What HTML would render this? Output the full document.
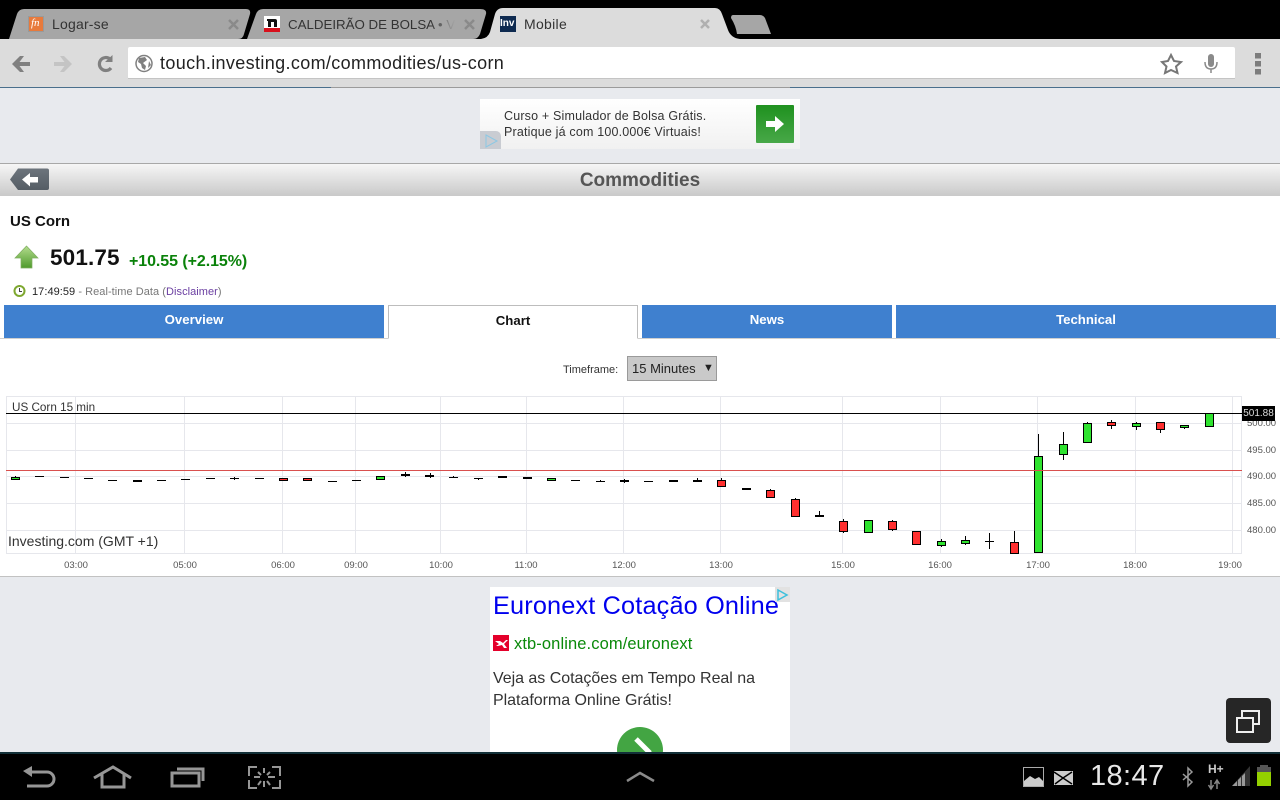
<!DOCTYPE html>
<html><head><meta charset="utf-8"><title>Mobile</title>
<style>
html,body{margin:0;padding:0;background:#000}
#p{position:relative;width:1280px;height:800px;overflow:hidden;background:#e8eaee;font-family:"Liberation Sans",sans-serif;color:#111}
.a{position:absolute;white-space:nowrap}
svg{position:absolute;left:0;top:0}
.tab{top:305px;height:33px;line-height:30px;background:#3f80cf;color:#fff;font-weight:bold;font-size:13.2px;text-align:center}
.g line{stroke:#e6e7ec;stroke-width:1}
.x{font-size:9.5px;color:#555;top:560px;width:40px;text-align:center}
.y{font-size:9.5px;color:#555;left:1247px}
</style></head><body><div id="p">
<div class="a" style="left:0;top:0;width:1280px;height:39px;background:#000"></div>
<svg width="1280" height="90">
<path d="M9 39 L17 14 Q19 9 24 9 H246 Q251 9 250 14 L244 34 Q243 39 238 39Z" fill="#a6a6a6"/>
<path d="M247 39 L256 14 Q258 9 263 9 H480 Q487 9 486 14 L480 34 Q478 39 473 39Z" fill="#a6a6a6"/>
<path d="M481 39 Q488 38 490 32 L495 14 Q497 8 503 8 H715 Q720 8 722 14 L728 30 Q731 38 740 39Z" fill="#dcdcdc"/>
<path d="M733 15 H760 Q763 15 765 18 L771 34 H737 Q736 26 731 18 Q731 15 733 15Z" fill="#a6a6a6"/>
<rect x="0" y="39" width="1280" height="48" fill="#dcdcdc"/>
<rect x="128" y="47" width="1107" height="32" rx="2" fill="#fff"/>
<rect x="128" y="78" width="1107" height="1" fill="#c4c4c4"/>
<rect x="0" y="87" width="331" height="1" fill="#4a6f8c"/>
<rect x="331" y="87" width="459" height="1" fill="#9b9b9b"/>
<rect x="790" y="87" width="490" height="1" fill="#4a6f8c"/>
<!-- favicons -->
<rect x="28.500" y="16.500" width="15" height="15" fill="#e87a3c" stroke="#999"/>
<rect x="264" y="16" width="16" height="12" fill="#fff"/><rect x="264" y="28" width="16" height="4" fill="#d8101c"/>
<path d="M267 19 H275 Q277 19 277 21 V27 H274 V22 H271 V27 H268 V21 H267Z" fill="#111"/>
<rect x="500" y="16" width="16" height="16" fill="#0e2a50"/>
<!-- close -->
<path d="M229 20 L238 29 M238 20 L229 29 M465 20 L474 29 M474 20 L465 29" stroke="#8a8a8a" stroke-width="2.500"/>
<path d="M701 20 L709 28 M709 20 L701 28" stroke="#b0b0b0" stroke-width="2.500"/>
<!-- nav -->
<path d="M30 64 H17" fill="none" stroke="#808080" stroke-width="4"/><path d="M20 56 H24 L18 64 L24 72 H20 L12 64Z" fill="#808080"/>
<path d="M54 64 H67" fill="none" stroke="#c4c4c4" stroke-width="4"/><path d="M64 56 H60 L66 64 L60 72 H64 L72 64Z" fill="#c4c4c4"/>
<path d="M111 68 A6.500 6.500 0 1 1 110 59" fill="none" stroke="#808080" stroke-width="3.200"/><path d="M105 62 H112.500 V55Z" fill="#808080"/>
<circle cx="144" cy="63.500" r="8" fill="none" stroke="#808080" stroke-width="1.500"/>
<path d="M139 58 L145 57 L147 60 L143 63 L146 66 L145 70 L142 68 L141 64 L138 62Z M149 61 L151 65 L148 68Z" fill="#808080"/>
<path d="M1171 55 L1174 61 L1181 62 L1176 66.500 L1177.500 73 L1171 70 L1165 73 L1166.500 66.500 L1162 62 L1168 61Z" fill="#fff" stroke="#777" stroke-width="2"/>
<rect x="1208" y="54" width="6" height="13" rx="3" fill="#8a8a8a"/><path d="M1205 62 Q1205 69 1211 69 Q1217 69 1217 62 M1211 69 V73" fill="none" stroke="#8a8a8a" stroke-width="1.500"/>
<rect x="1255" y="53" width="6" height="5.500" fill="#7d7d7d"/><rect x="1255" y="61" width="6" height="5.500" fill="#7d7d7d"/><rect x="1255" y="69" width="6" height="5.500" fill="#7d7d7d"/>
</svg>
<div class="a" style="left:31px;top:17px;font:italic 11px 'Liberation Serif',serif;color:#fff">fn</div>
<div class="a" style="left:500px;top:18px;font:bold 10px 'Liberation Sans',sans-serif;color:#fff">Inv</div>
<div class="a" style="left:52px;top:16px;font-size:14px;color:#333;letter-spacing:.2px">Logar-se</div>
<div class="a" style="left:288px;top:17px;width:167px;overflow:hidden;font-size:13.300px;color:#333;-webkit-mask-image:linear-gradient(90deg,#000 85%,transparent);mask-image:linear-gradient(90deg,#000 85%,transparent)">CALDEIRÃO DE BOLSA • Ve</div>
<div class="a" style="left:524px;top:16px;font-size:14px;color:#333;letter-spacing:.3px">Mobile</div>
<div class="a" style="left:160px;top:53px;font-size:18px;color:#222;letter-spacing:.36px">touch.investing.com/commodities/us-corn</div>

<!-- top ad -->
<div class="a" style="left:480px;top:99px;width:320px;height:50px;background:linear-gradient(#fff,#f1f1f1)"></div>
<div class="a" style="left:504px;top:108px;font-size:12.500px;line-height:16px;color:#333;letter-spacing:.18px">Curso + Simulador de Bolsa Grátis.<br>Pratique já com 100.000€ Virtuais!</div>
<div class="a" style="left:756px;top:105px;width:38px;height:38px;background:linear-gradient(#1f911f,#48a848);border-radius:1px"></div>
<div class="a" style="left:480px;top:131px;width:21px;height:18px;background:#c9ccd2;border-radius:0 5px 0 0"></div>
<svg width="1280" height="160" style="pointer-events:none">
<path d="M766 121 H775 V116 L784 124 L775 132 V127 H766Z" fill="#fff"/>
<path d="M486 135 L497 141 L486 147Z" fill="none" stroke="#8cc8e4" stroke-width="1"/>
</svg>

<!-- header -->
<div class="a" style="left:0;top:163px;width:1280px;height:32px;background:linear-gradient(#f6f6f6,#c9c9c9);border-top:1px solid #a8a8a8;border-bottom:1px solid #8a8a8a"></div>
<svg width="60" height="200">
<defs><linearGradient id="bk" x1="0" y1="0" x2="0" y2="1"><stop offset="0" stop-color="#6c747c"/><stop offset="1" stop-color="#555d65"/></linearGradient></defs>
<path d="M10 179.500 L18 168.500 H47 Q49 168.500 49 170.500 V188 Q49 190 47 190 H18Z" fill="url(#bk)"/>
<path d="M22 179.500 L30 173 V177 H38 V182.500 H30 V186.500Z" fill="#fff"/>
</svg>
<div class="a" style="left:0;top:170px;width:1280px;text-align:center;font-weight:bold;font-size:19px;line-height:22px;color:#555">Commodities</div>

<!-- white content -->
<div class="a" style="left:0;top:196px;width:1280px;height:380px;background:#fff;border-bottom:1px solid #c2c2c2"></div>
<div class="a" style="left:10px;top:213px;font-weight:bold;font-size:15px;color:#111">US Corn</div>
<svg width="60" height="300" style="left:0;top:0">
<defs><linearGradient id="ar" x1="0" y1="0" x2="0" y2="1"><stop offset="0" stop-color="#b4dc8e"/><stop offset="1" stop-color="#4f9a2c"/></linearGradient></defs>
<path d="M15 258 L26.500 246 L38 258 H32 V268 H21 V258Z" fill="url(#ar)" stroke="#7fae60" stroke-width=".7"/>
<circle cx="19.500" cy="291" r="5" fill="#fff" stroke="#7ea830" stroke-width="2"/><path d="M19.500 288 V291.500 H22" fill="none" stroke="#444" stroke-width="1"/>
</svg>
<div class="a" style="left:50px;top:245px;font-weight:bold;font-size:22.500px;color:#111;letter-spacing:.15px">501.75</div>
<div class="a" style="left:129px;top:253px;font-weight:bold;font-size:16px;color:#0a820a;letter-spacing:-.07px">+10.55 (+2.15%)</div>
<div class="a" style="left:32px;top:286px;font-size:11px;color:#777;letter-spacing:.05px"><span style="color:#222">17:49:59</span> - Real-time Data (<span style="color:#6a3ea1">Disclaimer</span>)</div>

<!-- tabs -->
<div class="a" style="left:0;top:338px;width:1280px;height:1px;background:#cfcfcf"></div>
<div class="a tab" style="left:4px;width:380px">Overview</div>
<div class="a tab" style="left:388px;top:305px;width:250px;background:#fff;color:#111;border:1px solid #bdbdbd;border-bottom:1px solid #fff;box-sizing:border-box;height:34px">Chart</div>
<div class="a tab" style="left:642px;width:250px">News</div>
<div class="a tab" style="left:896px;width:380px">Technical</div>

<div class="a" style="left:563px;top:364px;font-size:11px;color:#333">Timeframe:</div>
<div class="a" style="left:627px;top:356px;width:88px;height:23px;background:#c9c9c9;border:1px solid #9a9a9a;font-size:13px;line-height:24px;color:#222;text-indent:4px">15 Minutes<span style="position:absolute;left:75px;top:-1px;text-indent:0;font-size:11px">▼</span></div>

<!-- chart -->
<svg width="1280" height="580" style="left:0;top:0">
<g class="g">
<rect x="6.500" y="396.500" width="1235" height="157" fill="#fff" stroke="#e6e7ec"/>
<line x1="6" x2="1242" y1="423.500" y2="423.500"/><line x1="6" x2="1242" y1="450.500" y2="450.500"/><line x1="6" x2="1242" y1="476.500" y2="476.500"/><line x1="6" x2="1242" y1="503.500" y2="503.500"/><line x1="6" x2="1242" y1="530.500" y2="530.500"/>
<line x1="75.500" x2="75.500" y1="396" y2="553"/><line x1="184.500" x2="184.500" y1="396" y2="553"/><line x1="282.500" x2="282.500" y1="396" y2="553"/><line x1="355.500" x2="355.500" y1="396" y2="553"/><line x1="440.500" x2="440.500" y1="396" y2="553"/><line x1="526.500" x2="526.500" y1="396" y2="553"/><line x1="623.500" x2="623.500" y1="396" y2="553"/><line x1="720.500" x2="720.500" y1="396" y2="553"/><line x1="842.500" x2="842.500" y1="396" y2="553"/><line x1="940.500" x2="940.500" y1="396" y2="553"/><line x1="1037.500" x2="1037.500" y1="396" y2="553"/><line x1="1135.500" x2="1135.500" y1="396" y2="553"/><line x1="1232.500" x2="1232.500" y1="396" y2="553"/>
</g>
<line x1="6" x2="1242" y1="413.500" y2="413.500" stroke="#000"/>
<!-- wicks and dashes -->
<path stroke="#000" stroke-width="1" fill="none" d="
M15.500 476V478
M35 476.500h9 M60 477.500h9 M84 478.500h9 M108 480.500h9 M157 480.500h9 M181 479.500h9 M206 478.500h9 M230 478.500h9 M234.500 477V480 M255 478.500h9 M328 481.500h9 M352 480.500h9
M405.500 472V477 M430.500 473V478 M449 477.500h9 M453.500 476V478 M474 478.500h9 M478.500 478V480 M571 480.500h9 M596 481.500h9 M600.500 480V482 M624.500 479V483 M644 481.500h9 M697.500 478V481
M721.500 478V481 M770.500 489V491 M795.500 498V500 M819.500 511V515 M843.500 519V522 M843.500 531V533 M892.500 520V522 M892.500 529V531
M941.500 539V542 M941.500 545V547 M965.500 536V541 M965.500 543V545 M985 541.500h9 M989.500 533V549 M1014.500 531V543
M1038.500 434V457 M1063.500 432V445 M1063.500 454V460 M1087.500 422V424 M1111.500 420V423 M1111.500 425V429 M1136.500 422V424 M1136.500 426V430 M1160.500 429V433 M1184.500 427V429"/>
<!-- thick dashes -->
<g fill="#000">
<rect x="133" y="480" width="9" height="2"/><rect x="401" y="474" width="9" height="2"/><rect x="425" y="475" width="9" height="2"/><rect x="498" y="476" width="9" height="2"/><rect x="523" y="477" width="9" height="2"/><rect x="620" y="480" width="9" height="2"/><rect x="669" y="480" width="9" height="2"/><rect x="693" y="480" width="9" height="2"/><rect x="742" y="488" width="9" height="2"/><rect x="815" y="515" width="9" height="2"/>
</g>
<!-- green bodies -->
<g fill="#2fe32f" stroke="#000" stroke-width="1">
<rect x="11.500" y="477.500" width="8" height="2"/><rect x="376.500" y="476.500" width="8" height="3"/><rect x="547.500" y="478.500" width="8" height="2"/><rect x="864.500" y="520.500" width="8" height="12"/><rect x="937.500" y="541.500" width="8" height="4"/><rect x="961.500" y="540.500" width="8" height="3"/><rect x="1034.500" y="456.500" width="8" height="96"/><rect x="1059.500" y="444.500" width="8" height="10"/><rect x="1083.500" y="423.500" width="8" height="19"/><rect x="1132.500" y="423.500" width="8" height="3"/><rect x="1180.500" y="425.500" width="8" height="2"/><rect x="1205.500" y="413.500" width="8" height="13"/>
</g>
<!-- red bodies -->
<g fill="#ff2f2f" stroke="#000" stroke-width="1">
<rect x="279.500" y="478.500" width="8" height="2"/><rect x="303.500" y="478.500" width="8" height="2"/><rect x="717.500" y="480.500" width="8" height="6"/><rect x="766.500" y="490.500" width="8" height="7"/><rect x="791.500" y="499.500" width="8" height="17"/><rect x="839.500" y="521.500" width="8" height="10"/><rect x="888.500" y="521.500" width="8" height="8"/><rect x="912.500" y="531.500" width="8" height="13"/><rect x="1010.500" y="542.500" width="8" height="11"/><rect x="1107.500" y="422.500" width="8" height="3"/><rect x="1156.500" y="422.500" width="8" height="7"/>
</g>
<line x1="6" x2="1242" y1="470.500" y2="470.500" stroke="#d9504e"/>
</svg>
<div class="a" style="left:12px;top:401px;font-size:11.700px;color:#333">US Corn 15 min</div>
<div class="a" style="left:8px;top:533px;font-size:14px;color:#333">Investing.com (GMT +1)</div>
<div class="a y" style="top:418px">500.00</div><div class="a y" style="top:445px">495.00</div><div class="a y" style="top:471px">490.00</div><div class="a y" style="top:498px">485.00</div><div class="a y" style="top:525px">480.00</div>
<div class="a" style="left:1242px;top:406px;width:33px;height:15px;background:#000;color:#ddd;font-size:10px;line-height:15px;text-align:center">501.88</div>
<div class="a x" style="left:56px">03:00</div><div class="a x" style="left:165px">05:00</div><div class="a x" style="left:263px">06:00</div><div class="a x" style="left:336px">09:00</div><div class="a x" style="left:421px">10:00</div><div class="a x" style="left:506px">11:00</div><div class="a x" style="left:604px">12:00</div><div class="a x" style="left:701px">13:00</div><div class="a x" style="left:823px">15:00</div><div class="a x" style="left:920px">16:00</div><div class="a x" style="left:1018px">17:00</div><div class="a x" style="left:1115px">18:00</div><div class="a x" style="left:1210px">19:00</div>

<!-- lower ad -->
<div class="a" style="left:490px;top:587px;width:300px;height:170px;background:#fff"></div>
<div class="a" style="left:493px;top:592px;font-size:25.300px;color:#0000ee;letter-spacing:.15px">Euronext Cotação Online</div>
<div class="a" style="left:775px;top:587px;width:15px;height:15px;background:#e2e2e2"></div>
<div class="a" style="left:493px;top:635px;width:16px;height:16px;background:#e4002b"></div>
<svg width="1280" height="800">
<path d="M778 590 L787 595 L778 600Z" fill="none" stroke="#3cc0dc" stroke-width="1.500"/>
<path d="M495 641 H500 L503 643 L506 640 H508 L504 644 L507 648 H504 L502 645 L498 646 H496 L499 644Z" fill="#fff"/>
<circle cx="640" cy="750" r="23" fill="#43a543"/>
<path d="M636 739 L650 753" fill="none" stroke="#fff" stroke-width="5"/>
</svg>
<div class="a" style="left:514px;top:635px;font-size:16.500px;color:#0a8a0a;letter-spacing:.1px">xtb-online.com/euronext</div>
<div class="a" style="left:493px;top:668px;font-size:16px;line-height:22px;color:#333;letter-spacing:-.03px">Veja as Cotações em Tempo Real na<br>Plataforma Online Grátis!</div>

<!-- floating button -->
<div class="a" style="left:1226px;top:698px;width:45px;height:45px;background:#262626;border-radius:4px"></div>
<svg width="1280" height="800">
<path d="M1242 717 V711 H1259 V724 H1254" fill="none" stroke="#eee" stroke-width="2"/>
<rect x="1237" y="718" width="16" height="14" fill="none" stroke="#eee" stroke-width="2"/>
</svg>

<!-- system bar -->
<div class="a" style="left:0;top:752px;width:1280px;height:48px;background:#000;border-top:2px solid #123038;box-sizing:border-box"></div>
<svg width="1280" height="800">
<path d="M23 771 L32 766 V777Z" fill="#969696"/>
<g fill="none" stroke="#969696" stroke-width="3">
<path d="M31 772 H47 A7 7 0 0 1 47 786 H27"/>
<path d="M94 778 L113 767 L131 778 M102 774 V787 H124 V774"/>
<rect x="172" y="773" width="27" height="13"/><path d="M177 769 H203 V781"/>
<path stroke-width="2" d="M249 776 V767 H257 M272 767 H280 V776 M249 780 V788 H257 M272 788 H280 V780 M264 768 V773 M264 781 V787 M254 777 H260 M268 777 H275 M258 772 L261 775 M270 772 L267 775 M258 785 L261 781 M270 785 L267 781"/>
<path stroke-width="2.500" stroke="#8a8a8a" d="M627 781 L640 773 L654 781"/>
</g>
<!-- status icons -->
<rect x="1023.500" y="767.500" width="20" height="19" fill="none" stroke="#aaa"/><path d="M1024 786 V781 L1030 776 L1035 779 L1039 777 L1043 781 V786Z" fill="#ccc"/>
<rect x="1054" y="771" width="19" height="14" fill="#ccc"/><path d="M1054 772 L1063 778 L1072 772 M1055 784 L1063 778 L1072 784" fill="none" stroke="#000" stroke-width="1.500"/>
<path d="M1183 774 L1192 782 L1188 786 V768 L1192 772 L1183 780" fill="none" stroke="#999" stroke-width="1.500"/>
<path d="M1211 780 V789 M1208.500 785 L1211 789 L1213.500 785 M1217 789 V780 M1214.500 784 L1217 780 L1219.500 784" fill="none" stroke="#888" stroke-width="1.500"/>
<path d="M1232 786 L1250 766 V786Z" fill="#333"/><path d="M1232 786 L1237 781 V786Z M1238 786 V780 L1241 777 V786Z M1242 786 V776 L1245 773 V786Z" fill="#999"/>
<rect x="1257" y="772" width="14" height="14" fill="#94d000"/><rect x="1260" y="765" width="8" height="2" fill="#555"/><rect x="1257" y="767" width="14" height="5" fill="#555"/>
</svg>
<div class="a" style="left:1090px;top:760px;font-size:29px;color:#e8e8e8;letter-spacing:.4px">18:47</div>
<div class="a" style="left:1208px;top:762px;font-size:12px;font-weight:bold;color:#ccc">H+</div>
</div></body></html>
